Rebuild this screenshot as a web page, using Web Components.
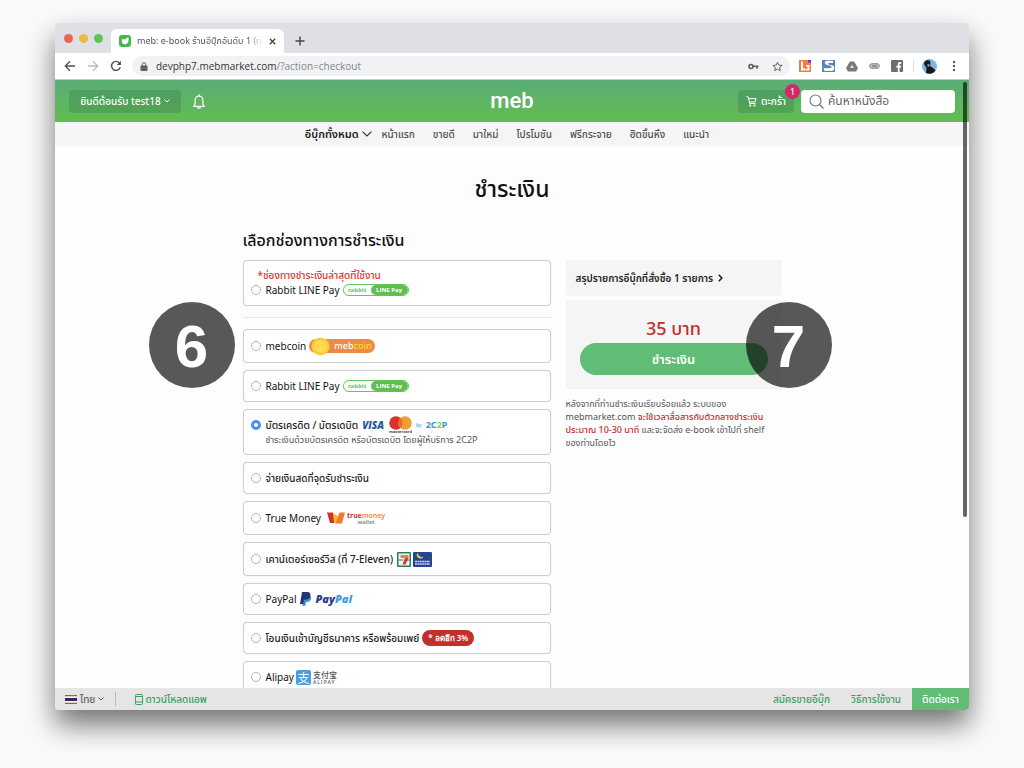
<!DOCTYPE html>
<html lang="th">
<head>
<meta charset="utf-8">
<title>meb: e-book checkout</title>
<style>
  html { height: 100%; }
  body {
    margin: 0; height: 100%; box-sizing: border-box; padding: 23px 55px 58px;
    background: #fafafa; color: #222;
    font-family: "Noto Sans", "Noto Sans Thai", "Noto Sans CJK SC", sans-serif; font-size: 10px; line-height: 14px;
  }
</style>
</head>
<body>
<browser-window>
  <browser-tab slot="tabs">meb: e-book ร้านอีบุ๊กอันดับ 1 (ทุกวัน)</browser-tab>
  <browser-toolbar slot="toolbar"></browser-toolbar>
  <site-header></site-header>
  <site-nav></site-nav>
  <checkout-page></checkout-page>
  <site-footer></site-footer>
</browser-window>

<script>
const define = (name, html, setup) => {
  const tpl = document.createElement('template');
  tpl.innerHTML = html;
  customElements.define(name, class extends HTMLElement {
    constructor() {
      super();
      this.attachShadow({ mode: 'open' }).append(tpl.content.cloneNode(true));
    }
    connectedCallback() { if (setup) setup(this, this.shadowRoot); }
  });
};

define('browser-window', `
<style>
  :host { display: flex; flex-direction: column; height: 100%; position: relative; overflow: visible; border-radius: 4px; background: #fdfdfd; box-shadow: 0 15px 28px rgba(0,0,0,.54); }
  .strip { display: flex; flex: none; align-items: flex-end; height: 30px; background: #dee0e6; border-radius: 4px 4px 0 0; }
  .lights { display: flex; gap: 6px; padding: 0 8px 0 9px; height: 30px; align-items: center; }
  .lights i { width: 9px; height: 9px; border-radius: 50%; }
  .add { background: none; border: 0; padding: 0; margin: 0 0 7px 11px; width: 10px; height: 10px; display: block; }
  .add svg { display: block; }
  .view { flex: 1; min-height: 0; display: flex; flex-direction: column; overflow: hidden; position: relative; border-radius: 0 0 4px 4px; }
  .thumb { position: absolute; right: 2px; top: 2px; width: 4px; height: 69%; border-radius: 2px; background: rgba(0,0,0,.6); }
</style>
<div class="strip">
  <div class="lights"><i style="background:#ec6559"></i><i style="background:#f0b944"></i><i style="background:#5fc454"></i></div>
  <slot name="tabs"></slot>
  <button class="add" aria-label="New tab"><svg width="10" height="10" viewBox="0 0 10 10"><path d="M5 .5v9M.5 5h9" stroke="#444" stroke-width="1.4"/></svg></button>
</div>
<slot name="toolbar"></slot>
<div class="view"><slot></slot><div class="thumb"></div></div>`);

define('browser-tab', `
<style>
  :host { display: flex; align-items: center; height: 24px; width: 173px; box-sizing: border-box; padding: 0 8px; margin-top: 6px; background: #fff; border-radius: 6px 6px 0 0; font-size: 9px; color: #555; }
  .fav { flex: none; margin-right: 6px; }
  .t { flex: 1; white-space: nowrap; overflow: hidden; -webkit-mask: linear-gradient(90deg,#000 88%,transparent); }
  button { border: 0; background: none; padding: 0; margin-left: 6px; width: 7px; height: 7px; display: flex; }
</style>
<svg class="fav" width="12" height="12" viewBox="0 0 12 12"><rect width="12" height="12" rx="3" fill="#46b94c"/><path d="M2.600 4.600 5.600 4l.6 1.200L7 3l2.700-.4-.5 5.200-3.200 1.600-2.600-.9z" fill="#fff"/></svg>
<span class="t"><slot></slot></span>
<button aria-label="Close tab"><svg width="7" height="7" viewBox="0 0 7 7"><path d="m.8.8 5.4 5.4M6.200.8.8 6.2" stroke="#444" stroke-width="1.3"/></svg></button>`);

define('browser-toolbar', `
<style>
  :host { display: flex; flex: none; align-items: center; height: 27px; box-sizing: border-box; padding: 0 9px; background: #fff; border-bottom: 1px solid #c9c9cc; }
  .nav { display: flex; gap: 11px; margin-right: 10px; }
  svg { display: block; flex: none; }
  .url { flex: 1; display: flex; align-items: center; height: 20px; border-radius: 10px; background: #f1f2f4; padding: 0 8px; gap: 8px; }
  .url span { flex: 1; font: 500 10px/14px "Open Sans", sans-serif; color: #333; }
  .url em { font-style: normal; color: #80868b; }
  .ext { display: flex; align-items: center; gap: 11px; margin-left: 9px; }
  .sep { width: 1px; height: 12px; background: #ddd; }
</style>
<div class="nav">
  <svg width="12" height="12" viewBox="0 0 12 12" fill="none" stroke="#4c4f53" stroke-width="1.3"><path d="M11 6H1.500M6 1.300 1.300 6 6 10.700"/></svg>
  <svg width="12" height="12" viewBox="0 0 12 12" fill="none" stroke="#babcbe" stroke-width="1.3"><path d="M1 6h9.500M6 1.300 10.700 6 6 10.700"/></svg>
  <svg width="12" height="12" viewBox="0 0 12 12" fill="none" stroke="#4c4f53" stroke-width="1.4"><path d="M10.300 7.300A4.500 4.500 0 1 1 9.500 3"/><path d="M10.900.8v4.200H6.700z" fill="#4c4f53" stroke="none"/></svg>
</div>
<div class="url">
  <svg width="8" height="9" viewBox="0 0 8 9"><rect x=".5" y="3.500" width="7" height="5.500" rx=".8" fill="#5f6368"/><path d="M2.300 4V2.300a1.700 1.700 0 0 1 3.400 0V4" fill="none" stroke="#5f6368"/></svg>
  <span>devphp7.mebmarket.com<em>/?action=checkout</em></span>
  <svg width="11" height="7" viewBox="0 0 11 7" fill="none" stroke="#555a5f" stroke-width="1.600"><circle cx="3" cy="3.500" r="2"/><path d="M5 3.300h5.500M9 3.300v2.500"/></svg>
  <svg width="11" height="11" viewBox="0 0 12 12" style="margin:0 -1px 0 5px"><path d="m6 1.200 1.400 3.300 3.600.3-2.700 2.300.8 3.500L6 8.700l-3.100 1.900.8-3.500L1 4.800l3.600-.3z" fill="none" stroke="#555a5f"/></svg>
</div>
<div class="ext">
  <svg width="12" height="12" viewBox="0 0 12 12"><rect width="12" height="12" fill="#f47b3c"/><path d="M2 1.500h2v7h2.500v2H2zM7 5h3.500v5.500H7V9h1.500V6.500H7z" fill="#fff"/><rect x="9" y="0" width="3" height="2.500" fill="#4b3df0"/></svg>
  <svg width="13" height="12" viewBox="0 0 13 12"><rect width="13" height="12" fill="#5586b6"/><path d="M11 .8H5C3 .8 2.500 2.500 3 3.800c.6 1.500 6 1.300 6.500 3 .4 1.600-2 1.500-8 1.300l1 3h7c2.500-.3 3.500-2.500 2.500-4.500-1-1.800-6-1.400-6-2.800 0-1 2-.8 5-.8z" fill="#fff"/></svg>
  <svg width="12" height="11" viewBox="0 0 12 11"><path d="M4 .5h4l4 6.500-2 3.500H2L0 7z" fill="#777"/><path d="m6 3.500 2 3.500H4z" fill="#ddd"/></svg>
  <svg width="11" height="6" viewBox="0 0 11 6"><rect x=".7" y=".7" width="9.600" height="4.600" rx="2" fill="#bbb" stroke="#888"/><path d="M3 3h5" stroke="#666"/></svg>
  <svg width="12" height="12" viewBox="0 0 12 12"><rect width="12" height="12" rx="1" fill="#6d6d6d"/><path d="M6.800 12V7.500H5.300V5.700h1.500V4.300c0-1.500.9-2.300 2.200-2.300h1.400v1.700h-1c-.6 0-.8.3-.8.8v1.200h1.700l-.3 1.800H8.600V12z" fill="#fff"/></svg>
  <div class="sep" style="margin:0 -3px 0 -1px"></div>
  <svg width="15" height="15" viewBox="0 0 15 15"><circle cx="7.500" cy="7.500" r="7.500" fill="#79b8e6"/><path d="M2 5C2 1.500 5.500.5 8 1.800L8.500 5l-.5 2 2.500 1.500 3 3A7.500 7.500 0 0 1 4 14L4.500 9z" fill="#16181d"/><path d="M5 5.500 7.300 5l.4 2-1.700 1z" fill="#b58a75"/></svg>
  <svg width="12" height="12" viewBox="0 0 12 12" fill="#555"><circle cx="6" cy="2" r="1.200"/><circle cx="6" cy="6" r="1.200"/><circle cx="6" cy="10" r="1.200"/></svg>
</div>`);

define('site-header', `
<style>
  :host { display: grid; flex: none; grid-template-columns: 1fr auto 1fr; align-items: center; height: 42px; padding: 0 14px; background: linear-gradient(#59ad77, #62bd4f); color: #fff; }
  .l, .r { display: flex; align-items: center; }
  .r { justify-content: flex-end; gap: 7px; }
  button { font: inherit; color: #fff; border: 0; border-radius: 4px; background: rgba(30,80,60,.2); height: 23px; padding: 0; display: flex; align-items: center; justify-content: center; gap: 3px; position: relative; font-weight: 500; }
  .user { width: 112px; } .cart { width: 56px; gap: 4px; }
  .bell { background: none; width: 14px; margin-left: 11px; }
  .logo { font-size: 22px; line-height: 30px; color: #fff; text-decoration: none; font-family: Roboto, sans-serif; font-weight: 500; }
  .badge { position: absolute; right: -6px; top: -6px; width: 15px; height: 15px; border-radius: 50%; background: #d12a68; font-size: 8px; line-height: 15px; text-align: center; }
  label { display: flex; align-items: center; width: 154px; height: 23px; box-sizing: border-box; background: #fff; border-radius: 4px; padding: 0 8px; gap: 4px; }
  input { font: inherit; font-size: 12px; min-width: 0; flex: 1; border: 0; padding: 0; outline: 0; background: none; }
  input::placeholder { color: #666; opacity: 1; }
  svg { flex: none; }
</style>
<div class="l">
  <button class="user"><span>ยินดีต้อนรับ test18</span><svg width="6" height="4" viewBox="0 0 6 4"><path d="m.5.6 2.500 2.400L5.500.6" fill="none" stroke="#fff"/></svg></button>
  <button class="bell" aria-label="Notifications"><svg width="12" height="15" viewBox="0 0 12 15" fill="none" stroke="#fff" stroke-width="1.200"><path d="M6 .3v1.500M.8 12.300h10.400L9.900 10V6a3.900 3.900 0 0 0-7.800 0v4zM4.300 12.600c.3 2.200 3.100 2.200 3.400 0"/></svg></button>
</div>
<a class="logo" href="#">meb</a>
<div class="r">
  <button class="cart"><svg width="11" height="11" viewBox="0 0 11 11" fill="none" stroke="#fff"><path d="M.3.8h1.900l1.500 6.700h5.800M2.700 2.600h7.500l-1 3.200-5.800.4"/><circle cx="4.200" cy="9.500" r=".8"/><circle cx="8.500" cy="9.500" r=".8"/></svg><span>ตะกร้า</span><span class="badge">1</span></button>
  <label><svg width="15" height="15" viewBox="0 0 15 15" fill="none" stroke="#777" stroke-width="1.200"><circle cx="6.500" cy="6.500" r="5.500"/><path d="m10.500 10.500 4 4"/></svg><input type="search" aria-label="ค้นหาหนังสือ" placeholder="ค้นหาหนังสือ"></label>
</div>`);

define('site-nav', `
<style>
  :host { display: flex; flex: none; justify-content: center; align-items: center; gap: 18px; height: 24px; padding-right: 10px; background: #f5f5f5; }
  a { color: #505050; text-decoration: none; white-space: nowrap; font-weight: 500; }
  .all { font-size: 11px; font-weight: 600; color: #222; display: flex; align-items: center; gap: 3px; margin-right: -8px; }
</style>
<a class="all" href="#">อีบุ๊กทั้งหมด<svg width="10" height="6" viewBox="0 0 10 6"><path d="m.5.6 4.500 4.400L9.500.6" fill="none" stroke="#333" stroke-width="1.200"/></svg></a>
<a href="#">หน้าแรก</a><a href="#">ขายดี</a><a href="#">มาใหม่</a><a href="#">โปรโมชัน</a><a href="#">ฟรีกระจาย</a><a href="#">ฮิตขึ้นหิ้ง</a><a href="#">แนะนำ</a>`);

define('step-marker', `
<style>
  :host { display: block; width: 86px; height: 86px; border-radius: 50%; background: rgba(0,0,0,.65); color: #fff; font: bold 60px/90px "Liberation Sans", sans-serif; text-align: center; }
</style><slot></slot>`);

define('pay-option', `
<style>
  :host { display: flex; flex-direction: column; justify-content: center; flex: none; box-sizing: border-box; min-height: 32px; padding: 0 7px; border: 1px solid #cfcfcf; border-radius: 4px; background: #fff; box-shadow: 0 0 1px #ddd; }
  :host([size="m"]) { min-height: 34px; }
  :host([size="l"]) { min-height: 46px; }
  label { display: flex; align-items: center; color: #222; white-space: nowrap; font-weight: 500; }
  :host([latin]) label { font-weight: 400; color: #111; }
  input { appearance: none; flex: none; width: 10px; height: 10px; box-sizing: border-box; margin: 0 5px 0 0; border: 1px solid #b5b5b5; border-radius: 50%; background: #fff; }
  input:checked { border: 3px solid #4a8ff7; }
  .logo { display: flex; align-items: center; height: 16px; }
  .note { display: block; padding-left: 15px; color: #555; font-size: 9px; line-height: 14px; white-space: nowrap; }
  .pre { display: block; padding-left: 7px; color: #e23434; white-space: nowrap; font-weight: 500; }
  [hidden] { display: none; }
</style>
<span class="pre" hidden></span>
<label><input type="radio"><span class="txt"></span><span class="logo"><slot></slot></span></label>
<span class="note" hidden></span>`, (el, root) => {
  root.querySelector('.txt').textContent = el.getAttribute('label');
  root.querySelector('input').checked = el.hasAttribute('selected');
  for (const k of ['pre', 'note']) {
    const v = el.getAttribute(k);
    if (v) { const n = root.querySelector('.' + k); n.textContent = v; n.hidden = false; }
  }
});

define('rabbit-logo', `
<style>
  :host { display: inline-flex; box-sizing: border-box; width: 66px; height: 12px; margin-left: 3px; border: 1px solid #5ec65a; border-radius: 6px; background: #fff; font: bold 6px/10px "Open Sans", sans-serif; color: #5ec65a; overflow: hidden; }
  span { flex: 1; text-align: center; } span + span { flex: none; width: 37px; border-radius: 6px; background: #5fc050; color: #fff; }
</style><span>rabbit</span><span>LINE Pay</span>`);

define('mebcoin-logo', `
<style>
  :host { display: inline-flex; align-items: center; box-sizing: border-box; width: 66px; height: 14px; margin-left: 3px; border-radius: 7px; background: #ec8b45; font: 500 9px/14px "Noto Sans", sans-serif; color: #fff; }
  svg { flex: none; margin: 0 4px 0 2px; } b { font-weight: 500; color: #fbdc3c; }
</style><svg width="19" height="19" viewBox="0 0 19 19"><circle cx="9.500" cy="9.500" r="9" fill="#f7cf3d"/><circle cx="9.500" cy="9.500" r="6.500" fill="#fbdf50" stroke="#f3cb3c" stroke-width=".8"/><path d="M6 12V7.500l2 1.500 1.500-2 1.500 2 2-1.500V12" fill="none" stroke="#f5d042"/></svg><span>meb<b>coin</b></span>`);

define('card-logos', `
<style>
  :host { display: inline-flex; align-items: center; margin-left: 4px; height: 16px; font-family: "Noto Sans", sans-serif; line-height: 14px; }
  .visa { font: italic 800 10px/14px "Open Sans", sans-serif; color: #1f5a98; margin-right: 5px; }
  .by { font-size: 5px; color: #4aa5dc; margin: 0 4px; } .cp { font-weight: 700; font-size: 9px; color: #2e9bd8; } .cp i { font-style: normal; color: #9ccb3b; }
</style>
<span class="visa">VISA</span>
<svg width="23" height="18" viewBox="0 0 23 18"><circle cx="7" cy="7" r="6.800" fill="#d8322c"/><circle cx="16" cy="7" r="6.800" fill="#eda03a"/><path d="M11.500 1.900a6.800 6.800 0 0 1 0 10.200 6.800 6.800 0 0 1 0-10.200" fill="#e96a2c"/><text x="11.500" y="17" font-size="4" font-weight="bold" text-anchor="middle" fill="#444">mastercard</text></svg>
<span class="by">by</span><span class="cp">2C<i>2</i>P</span>`);

define('truemoney-logo', `
<style>
  :host { display: inline-flex; align-items: center; margin-left: 6px; gap: 2px; font: 600 7px/7px "Open Sans", sans-serif; color: #ee7d33; }
  .n { display: flex; flex-direction: column; } b { color: #d92b2b; font-weight: 700; } small { font: 500 6px/6px "Noto Sans", sans-serif; color: #777; text-align: center; }
</style>
<svg width="18" height="12" viewBox="0 0 18 12"><path d="M0 .5h6l3 10.500H3z" fill="#d42f2a"/><path d="M6 1.500 10 3l1.500 3-2.500 5.500L7 11z" fill="#f6c02f"/><path d="M12.500 .5H18L15 11.500H8.500z" fill="#ee7b30"/></svg>
<span class="n"><span><b>true</b>money</span><small>wallet</small></span>`);

define('seven-logos', `
<style>:host { display: inline-flex; gap: 2px; margin-left: 4px; } svg { display: block; }</style>
<svg width="14" height="15" viewBox="0 0 14 15"><rect width="14" height="15" rx="1" fill="#2d7c5b"/><rect x="1.500" y="1.500" width="11" height="12" fill="#f2f5ef"/><path d="M3.500 3h8v3h-8z" fill="#ee8136"/><path d="M8 6h3.500L8.500 12.500h-3z" fill="#d9362c"/><path d="M1.500 8h5M9.800 8h2.700" stroke="#2d7c5b"/></svg>
<svg width="19" height="15" viewBox="0 0 19 15"><rect width="19" height="15" rx="1" fill="#24478f"/><path d="M4.500 1.500C3 4.500 6 7.500 10 5.500 7.500 5.500 5.500 4.500 4.500 1.500" fill="#f3dc3c" stroke="#f3dc3c" stroke-width=".6"/><path d="M2 9.500h15M2 12h15" stroke="#c6d0e6" stroke-width="1.400" stroke-dasharray="2 .4"/></svg>`);

define('paypal-logo', `
<style>:host { display: inline-flex; align-items: center; gap: 4px; margin-left: 3px; font: italic 800 11px/14px "Open Sans", sans-serif; color: #2a3f88; } b { font-weight: 800; color: #3c9cdc; }</style>
<svg width="12" height="14" viewBox="0 0 12 14"><path d="M4 4h6.500c1.500 2.500 0 6-3.500 6H6l-.6 3.800H2.200z" fill="#3793d3"/><path d="M2 0h5c3.500 0 4 2.500 3 5-.8 2-2.500 2.700-5 2.700H4L3.200 12H0z" fill="#26356f"/></svg>
<span>Pay<b>Pal</b></span>`);

define('discount-badge', `
<style>:host { display: inline-block; margin-left: 3px; padding: 0 6px; border-radius: 8px; background: #c1302b; color: #fff; font: 600 8px/16px "Noto Sans", sans-serif; }</style><slot></slot>`);

define('alipay-logo', `
<style>:host { display: inline-flex; align-items: center; gap: 2px; margin-left: 2px; color: #555; font-family: "Noto Sans CJK SC", sans-serif; }
  .i { width: 15px; height: 15px; border-radius: 2px; background: #469fe3; color: #fff; font-size: 12px; line-height: 15px; text-align: center; }
  .n { display: flex; flex-direction: column; font-size: 8px; line-height: 10px; font-weight: 500; } small { font: 500 5px/5px "Noto Sans", sans-serif; letter-spacing: 1px; }</style>
<span class="i">支</span><span class="n">支付宝<small>ALIPAY</small></span>`);

define('order-summary', `
<style>
  :host { display: flex; flex-direction: column; gap: 4px; position: relative; }
  .items { display: flex; align-items: center; gap: 5px; height: 36px; box-sizing: border-box; padding: 0 10px; background: #f5f5f5; border-radius: 3px; color: #222; text-decoration: none; font-weight: 600; white-space: nowrap; }
  .pay { display: flex; flex-direction: column; box-sizing: border-box; padding: 13px 14px 14px; background: #f5f5f5; border-radius: 3px; text-align: center; }
  .price { font-size: 18px; line-height: 30px; color: #c1302b; font-weight: 500; }
  button { height: 32px; border: 0; border-radius: 16px; background: #61bd75; color: #fff; font: inherit; font-size: 13px; font-weight: 600; }
  p { margin: 4px 0 0; font-size: 9px; line-height: 13px; color: #555; } em { font-style: normal; color: #c1302b; font-weight: 500; }
  step-marker { position: absolute; right: -50px; top: 42px; }
</style>
<a class="items" href="#">สรุปรายการอีบุ๊กที่สั่งซื้อ 1 รายการ<svg width="5" height="8" viewBox="0 0 5 8"><path d="m.8.8 3 3.200-3 3.200" fill="none" stroke="#222" stroke-width="1.600"/></svg></a>
<div class="pay"><span class="price">35 บาท</span><button>ชำระเงิน</button></div>
<p>หลังจากที่ท่านชำระเงินเรียบร้อยแล้ว ระบบของ<br>mebmarket.com <em>จะใช้เวลาสื่อสารกับตัวกลางชำระเงิน<br>ประมาณ 10-30 นาที</em> และจะจัดส่ง e-book เข้าไปที่ shelf<br>ของท่านโดยไว</p>
<step-marker>7</step-marker>`);

define('checkout-page', `
<style>
  :host { display: block; flex: 1; min-height: 0; overflow: hidden; }
  h1 { margin: 27px 0 0; font-size: 23px; line-height: 30px; font-weight: 500; text-align: center; color: #111; }
  .grid { position: relative; display: grid; grid-template-columns: 308px 216px; gap: 0 15px; justify-content: center; margin-top: 25px; width: 539px; margin-inline: auto; }
  h2 { margin: 0 0 8px; grid-column: 1 / -1; font-size: 16px; line-height: 24px; font-weight: 500; color: #111; }
  .list { display: flex; flex-direction: column; gap: 7px; }
  hr { width: 100%; height: 1px; margin: 4px 0; border: 0; background: #e8e8e8; }
  step-marker { position: absolute; left: -94px; top: 74px; }
</style>
<h1>ชำระเงิน</h1>
<div class="grid">
  <h2>เลือกช่องทางการชำระเงิน</h2>
  <div class="list">
    <pay-option latin size="l" pre="*ช่องทางชำระเงินล่าสุดที่ใช้งาน" label="Rabbit LINE Pay"><rabbit-logo></rabbit-logo></pay-option>
    <hr>
    <pay-option latin size="m" label="mebcoin"><mebcoin-logo></mebcoin-logo></pay-option>
    <pay-option latin label="Rabbit LINE Pay"><rabbit-logo></rabbit-logo></pay-option>
    <pay-option size="l" selected label="บัตรเครดิต / บัตรเดบิต" note="ชำระเงินด้วยบัตรเครดิต หรือบัตรเดบิต โดยผู้ให้บริการ 2C2P"><card-logos></card-logos></pay-option>
    <pay-option label="จ่ายเงินสดที่จุดรับชำระเงิน"></pay-option>
    <pay-option latin size="m" label="True Money"><truemoney-logo></truemoney-logo></pay-option>
    <pay-option size="m" label="เคาน์เตอร์เซอร์วิส (ที่ 7-Eleven)"><seven-logos></seven-logos></pay-option>
    <pay-option latin label="PayPal"><paypal-logo></paypal-logo></pay-option>
    <pay-option label="โอนเงินเข้าบัญชีธนาคาร หรือพร้อมเพย์"><discount-badge>* ลดอีก 3%</discount-badge></pay-option>
    <pay-option latin label="Alipay"><alipay-logo></alipay-logo></pay-option>
  </div>
  <order-summary></order-summary>
  <step-marker>6</step-marker>
</div>`);

define('site-footer', `
<style>
  :host { display: flex; flex: none; align-items: center; height: 22px; background: #e5e5e5; font-weight: 500; }
  a, button { color: #3d9f66; text-decoration: none; white-space: nowrap; }
  button { display: flex; align-items: center; gap: 3px; border: 0; background: none; font: inherit; color: #666; padding: 0 0 0 10px; }
  .sep { width: 1px; height: 14px; background: #bbb; margin: 0 19px 0 11px; }
  .app { display: flex; align-items: center; gap: 2px; flex: 1; }
  .link { margin-right: 21px; } .link + .link { margin-right: 11px; }
  .contact { background: #61bd75; color: #fff; line-height: 22px; padding: 0 10px; }
</style>
<button><svg width="12" height="9" viewBox="0 0 12 9"><path fill="#d8433f" d="M0 0h12v9H0z"/><path fill="#f5f5f5" d="M0 1.300h12v6.400H0z"/><path fill="#2a2a5c" d="M0 3h12v3H0z"/></svg>ไทย<svg width="6" height="4" viewBox="0 0 6 4"><path d="m.5.6 2.500 2.400L5.500.6" fill="none" stroke="#555"/></svg></button>
<span class="sep"></span>
<a class="app" href="#"><svg width="8" height="11" viewBox="0 0 8 11"><rect x=".5" y=".5" width="7" height="10" rx="1" fill="none" stroke="#3d9f66"/><path d="M.5 2.500h7M.5 8h7" stroke="#3d9f66"/></svg>ดาวน์โหลดแอพ</a>
<a class="link" href="#">สมัครขายอีบุ๊ก</a><a class="link" href="#">วิธีการใช้งาน</a><a class="contact" href="#">ติดต่อเรา</a>`);
</script>
</body>
</html>
